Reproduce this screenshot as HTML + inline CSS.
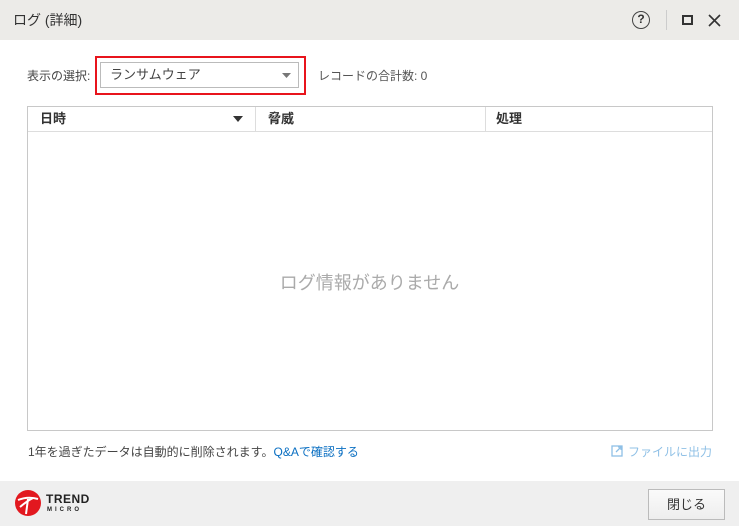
<!DOCTYPE html>
<html><head><meta charset="utf-8"><style>
*{margin:0;padding:0;box-sizing:border-box}
body{width:739px;height:526px;background:#fff;font-family:"Liberation Sans","Noto Sans CJK JP",sans-serif;color:#333;position:relative;overflow:hidden;font-size:12px}
.a{position:absolute;line-height:1.2}
</style></head><body>
<div class="a" style="left:0;top:0;width:739px;height:40px;background:#ecebe8"></div>
<div class="a" style="left:13px;top:12px;font-size:14px;color:#333">ログ (詳細)</div>
<div class="a" style="left:632px;top:11px;width:18px;height:18px;border:1.5px solid #444;border-radius:50%;font-size:12px;text-align:center;line-height:15px;color:#333;font-weight:bold">?</div>
<div class="a" style="left:666px;top:10px;width:1px;height:20px;background:#ccc"></div>
<div class="a" style="left:682px;top:15px;width:11px;height:10px;border:2px solid #333"></div>
<svg class="a" style="left:708px;top:14px" width="13" height="13"><path d="M1 1L12 12M12 1L1 12" stroke="#333" stroke-width="1.6"/></svg>
<div class="a" style="left:27px;top:69px;font-size:12px;color:#444">表示の選択:</div>
<div class="a" style="left:95px;top:56px;width:211px;height:39px;border:2px solid #e8141c"></div>
<div class="a" style="left:100px;top:62px;width:199px;height:26px;border:1px solid #bbb;background:#fff"></div>
<div class="a" style="left:110px;top:67px;font-size:13px;color:#444">ランサムウェア</div>
<svg class="a" style="left:282px;top:73px" width="9" height="5"><path d="M0 0H9L4.5 5Z" fill="#777"/></svg>
<div class="a" style="left:318px;top:69px;font-size:12px;color:#555">レコードの合計数: 0</div>
<div class="a" style="left:27px;top:106px;width:686px;height:325px;border:1px solid #c8c8c8"></div>
<div class="a" style="left:28px;top:131px;width:684px;height:1px;background:#ddd"></div>
<div class="a" style="left:255px;top:107px;width:1px;height:24px;background:#ddd"></div>
<div class="a" style="left:485px;top:107px;width:1px;height:24px;background:#ddd"></div>
<div class="a" style="left:40px;top:111px;font-size:13px;font-weight:bold;color:#333">日時</div>
<svg class="a" style="left:233px;top:116px" width="10" height="6"><path d="M0 0H10L5 6Z" fill="#333"/></svg>
<div class="a" style="left:268px;top:111px;font-size:13px;font-weight:bold;color:#333">脅威</div>
<div class="a" style="left:496px;top:111px;font-size:13px;font-weight:bold;color:#333">処理</div>
<div class="a" style="left:0;top:273px;width:739px;text-align:center;font-size:18px;color:#aaa">ログ情報がありません</div>
<div class="a" style="left:28px;top:445px;font-size:12px;color:#444">1年を過ぎたデータは自動的に削除されます。<span style="color:#0a6fc2">Q&amp;Aで確認する</span></div>
<svg class="a" style="left:611px;top:445px" width="12" height="12"><rect x="1" y="1" width="10" height="10" fill="none" stroke="#8fc0e6" stroke-width="1.3"/><path d="M5 7L10 2M7 2H10V5" stroke="#8fc0e6" stroke-width="1.3" fill="none"/></svg>
<div class="a" style="left:628px;top:445px;font-size:12px;color:#8fc0e6">ファイルに出力</div>
<div class="a" style="left:0;top:481px;width:739px;height:45px;background:#efefef"></div>
<div class="a" style="left:15px;top:490px;width:26px;height:26px;border-radius:50%;background:#e2181f"></div>
<svg class="a" style="left:15px;top:490px" width="26" height="26"><path d="M3 10Q13 6 23 9M5 17Q12 11 18 8" stroke="#fff" stroke-width="2" fill="none"/><path d="M13 9L11 24" stroke="#fff" stroke-width="2"/></svg>
<div class="a" style="left:46px;top:492px;font-size:12px;font-weight:bold;color:#222;letter-spacing:0.5px">TREND</div>
<div class="a" style="left:47px;top:507px;font-size:6px;font-weight:bold;color:#222;letter-spacing:3px">MICRO</div>
<div class="a" style="left:648px;top:489px;width:77px;height:31px;border:1px solid #bbb;background:linear-gradient(#fafafa,#eee);text-align:center;line-height:29px;font-size:13px;color:#333">閉じる</div>
</body></html>
